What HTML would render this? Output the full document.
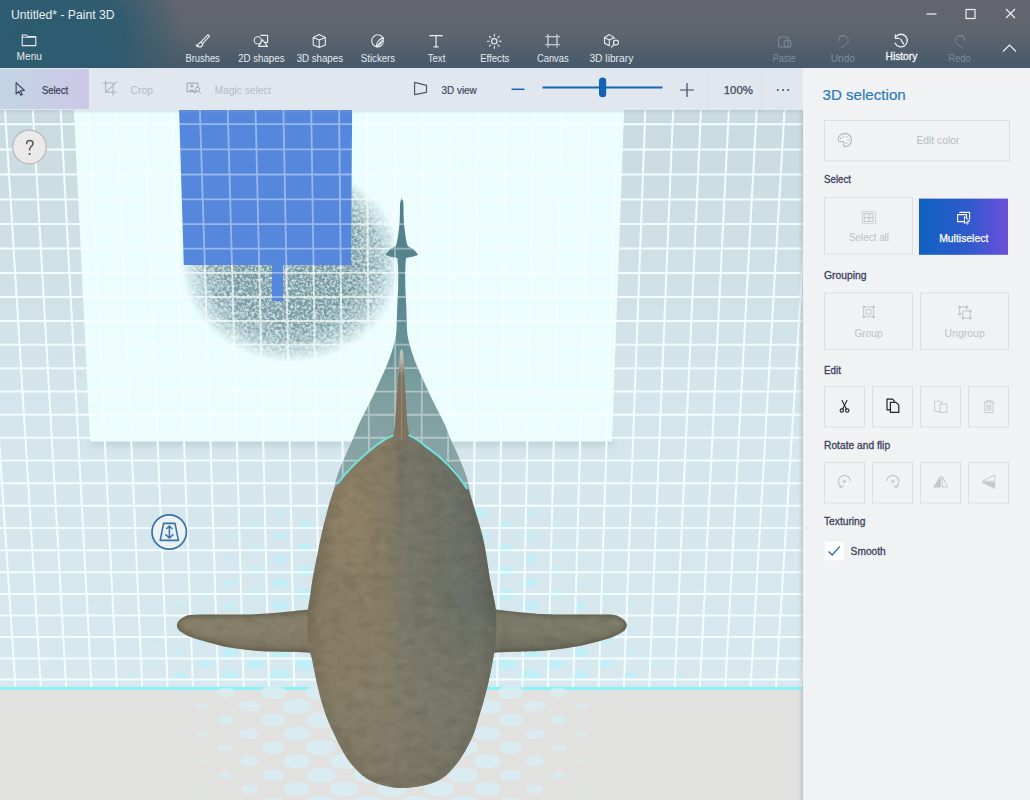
<!DOCTYPE html>
<html><head><meta charset="utf-8">
<style>
html,body{margin:0;padding:0;width:1030px;height:800px;overflow:hidden;background:#f0f2f4;}
svg{display:block;font-family:"Liberation Sans",sans-serif;}
</style></head>
<body>
<svg width="1030" height="800" viewBox="0 0 1030 800">
<defs>
  <linearGradient id="hdrV" x1="0" y1="0" x2="0" y2="68" gradientUnits="userSpaceOnUse">
    <stop offset="0" stop-color="#64666e"/>
    <stop offset="0.45" stop-color="#5f656e"/>
    <stop offset="1" stop-color="#45596a"/>
  </linearGradient>
  <radialGradient id="hdrTeal" cx="25" cy="34" r="162" gradientUnits="userSpaceOnUse" gradientTransform="translate(25 34) scale(1 0.66) translate(-25 -34)">
    <stop offset="0" stop-color="#2c5b70" stop-opacity="1"/>
    <stop offset="0.62" stop-color="#2d5b70" stop-opacity="0.92"/>
    <stop offset="0.85" stop-color="#345b6e" stop-opacity="0.4"/>
    <stop offset="1" stop-color="#3a5a6c" stop-opacity="0"/>
  </radialGradient>
  <linearGradient id="selBtn" x1="0" y1="0" x2="1" y2="0">
    <stop offset="0" stop-color="#c2d4e4"/>
    <stop offset="1" stop-color="#cdc8e7"/>
  </linearGradient>
  <linearGradient id="multiBtn" x1="0" y1="0" x2="1" y2="0">
    <stop offset="0" stop-color="#0f62c1"/>
    <stop offset="0.55" stop-color="#2f5acb"/>
    <stop offset="1" stop-color="#6b4fdb"/>
  </linearGradient>
  <clipPath id="cvClip"><rect x="0" y="110" width="803" height="690"/></clipPath>
  <linearGradient id="wallG" x1="0" y1="0" x2="0" y2="1">
    <stop offset="0" stop-color="#c9dbdf"/>
    <stop offset="0.5" stop-color="#d4e6eb"/>
    <stop offset="1" stop-color="#d7e9ee"/>
  </linearGradient>
  <linearGradient id="topShade" x1="0" y1="0" x2="0" y2="1">
    <stop offset="0" stop-color="#8a9aa4" stop-opacity="0.25"/>
    <stop offset="1" stop-color="#8a9aa4" stop-opacity="0"/>
  </linearGradient>
  <linearGradient id="rightShade" x1="0" y1="0" x2="1" y2="0">
    <stop offset="0" stop-color="#b8c4c8" stop-opacity="0"/>
    <stop offset="1" stop-color="#a9b4b8" stop-opacity="0.6"/>
  </linearGradient>
  <filter id="blur3" x="-20%" y="-200%" width="140%" height="500%"><feGaussianBlur stdDeviation="3"/></filter>
  <filter id="blur6" x="-20%" y="-20%" width="140%" height="140%"><feGaussianBlur stdDeviation="6"/></filter>
  <filter id="blur2" x="-20%" y="-50%" width="140%" height="200%"><feGaussianBlur stdDeviation="2"/></filter>
  <filter id="blur1" x="-50%" y="-5%" width="200%" height="110%"><feGaussianBlur stdDeviation="1"/></filter>
  <radialGradient id="blobG" cx="0.5" cy="0.5" r="0.5">
    <stop offset="0" stop-color="#000" stop-opacity="1"/>
    <stop offset="0.5" stop-color="#000" stop-opacity="1"/>
    <stop offset="0.78" stop-color="#000" stop-opacity="0.62"/>
    <stop offset="1" stop-color="#000" stop-opacity="0"/>
  </radialGradient>
  <filter id="speckle" x="0" y="0" width="1" height="1" color-interpolation-filters="sRGB">
    <feTurbulence type="fractalNoise" baseFrequency="0.33" numOctaves="3" seed="7" result="n"/>
    <feColorMatrix in="n" type="matrix" values="0 0 0 0 0  0 0 0 0 0  0 0 0 0 0  1 0 0 0 0" result="na"/>
    <feComposite in="na" in2="SourceAlpha" operator="arithmetic" k1="2.4" k2="0" k3="-0.25" k4="0" result="m"/>
    <feFlood flood-color="#7a9aa2"/>
    <feComposite in2="m" operator="in" result="base"/>
    <feTurbulence type="fractalNoise" baseFrequency="0.4" numOctaves="2" seed="3" result="n2"/>
    <feColorMatrix in="n2" type="matrix" values="0 0 0 0 0.8  0 0 0 0 0.9  0 0 0 0 0.92  4 0 0 0 -2.0" result="w"/>
    <feComposite in="w" in2="m" operator="in" result="wm"/>
    <feMerge><feMergeNode in="base"/><feMergeNode in="wm"/></feMerge>
  </filter>
  <filter id="mottle" x="0" y="0" width="1" height="1" color-interpolation-filters="sRGB">
    <feTurbulence type="fractalNoise" baseFrequency="0.07 0.11" numOctaves="4" seed="11" result="n"/>
    <feColorMatrix in="n" type="matrix" values="0 0 0 0 0.33  0 0 0 0 0.31  0 0 0 0 0.25  2.2 0 0 0 -1.0"/>
  </filter>
  <filter id="mottleL" x="0" y="0" width="1" height="1" color-interpolation-filters="sRGB">
    <feTurbulence type="fractalNoise" baseFrequency="0.08 0.12" numOctaves="4" seed="5" result="n"/>
    <feColorMatrix in="n" type="matrix" values="0 0 0 0 0.66  0 0 0 0 0.62  0 0 0 0 0.52  2.2 0 0 0 -1.05"/>
  </filter>
  <linearGradient id="tealG" x1="0" x2="0" gradientUnits="userSpaceOnUse" y1="197" y2="500">
    <stop offset="0" stop-color="#4f7e88"/>
    <stop offset="0.34" stop-color="#5a8891"/>
    <stop offset="0.5" stop-color="#6a9398"/>
    <stop offset="0.64" stop-color="#7d9e9f"/>
    <stop offset="1" stop-color="#8ea7a9"/>
  </linearGradient>
  <linearGradient id="bodyG" x1="300" y1="0" x2="500" y2="0" gradientUnits="userSpaceOnUse">
    <stop offset="0" stop-color="#8a7c62"/>
    <stop offset="0.4" stop-color="#877c66"/>
    <stop offset="0.55" stop-color="#767668"/>
    <stop offset="0.8" stop-color="#6b7067"/>
    <stop offset="1" stop-color="#666c64"/>
  </linearGradient>
  <linearGradient id="finL" x1="0" y1="612" x2="0" y2="652" gradientUnits="userSpaceOnUse">
    <stop offset="0" stop-color="#837d68"/>
    <stop offset="0.5" stop-color="#88806a"/>
    <stop offset="1" stop-color="#7a735f"/>
  </linearGradient>
  <linearGradient id="finR" x1="0" y1="612" x2="0" y2="652" gradientUnits="userSpaceOnUse">
    <stop offset="0" stop-color="#7c7c6c"/>
    <stop offset="0.5" stop-color="#7b7a66"/>
    <stop offset="1" stop-color="#6e6e60"/>
  </linearGradient>
  <linearGradient id="dfinG" x1="0" y1="348" x2="0" y2="446" gradientUnits="userSpaceOnUse">
    <stop offset="0" stop-color="#d4d2c8"/>
    <stop offset="0.14" stop-color="#b8b2a2"/>
    <stop offset="0.28" stop-color="#7f735e"/>
    <stop offset="0.86" stop-color="#7e725e"/>
    <stop offset="1" stop-color="#7e725e" stop-opacity="0"/>
  </linearGradient>

  <linearGradient id="lowerG" x1="0" y1="440" x2="0" y2="600" gradientUnits="userSpaceOnUse">
    <stop offset="0" stop-color="#fff" stop-opacity="0"/>
    <stop offset="1" stop-color="#fff" stop-opacity="1"/>
  </linearGradient>
  <mask id="lowerMask" maskUnits="userSpaceOnUse" x="0" y="0" width="1030" height="800"><rect x="0" y="0" width="1030" height="800" fill="url(#lowerG)"/></mask>

  <linearGradient id="headG" x1="0" y1="600" x2="0" y2="760" gradientUnits="userSpaceOnUse">
    <stop offset="0" stop-color="#857f6c" stop-opacity="0"/>
    <stop offset="0.6" stop-color="#857f6c" stop-opacity="0.45"/>
    <stop offset="1" stop-color="#7f7966" stop-opacity="0.6"/>
  </linearGradient>

</defs>

<!-- HEADER -->
<rect x="0" y="0" width="1030" height="68" fill="url(#hdrV)"/>
<rect x="0" y="0" width="1030" height="68" fill="url(#hdrTeal)"/>
<g fill="#e9eef1">
  <text x="11" y="18.8" font-size="12" textLength="103.6" lengthAdjust="spacingAndGlyphs">Untitled* - Paint 3D</text>
</g>
<!-- window controls -->
<g stroke="#eef0f2" stroke-width="1.2" fill="none">
  <line x1="926.5" y1="14" x2="936.5" y2="14"/>
  <rect x="966" y="9.5" width="9" height="9"/>
  <path d="M1006 9 L1015 18 M1015 9 L1006 18"/>
  <path d="M1003 51.5 L1009.5 45 L1016 51.5"/>
</g>
<!-- header toolbar labels -->
<g fill="#e6ebee" font-size="10">
  <text x="16.6" y="60" font-size="10.5" textLength="25.4" lengthAdjust="spacingAndGlyphs">Menu</text>
  <text x="185.4" y="62.2" textLength="34.4" lengthAdjust="spacingAndGlyphs">Brushes</text>
  <text x="238.2" y="62.2" textLength="46.3" lengthAdjust="spacingAndGlyphs">2D shapes</text>
  <text x="296.7" y="62.2" textLength="46.3" lengthAdjust="spacingAndGlyphs">3D shapes</text>
  <text x="360.8" y="62.2" textLength="34.3" lengthAdjust="spacingAndGlyphs">Stickers</text>
  <text x="427.8" y="62.2" textLength="17.5" lengthAdjust="spacingAndGlyphs">Text</text>
  <text x="480.2" y="62.2" textLength="29.2" lengthAdjust="spacingAndGlyphs">Effects</text>
  <text x="537" y="62.2" textLength="31.6" lengthAdjust="spacingAndGlyphs">Canvas</text>
  <text x="589.4" y="62.2" textLength="43.9" lengthAdjust="spacingAndGlyphs">3D library</text>
  <text x="885.5" y="60" font-size="10.5" textLength="31.8" lengthAdjust="spacingAndGlyphs" fill="#f4f6f8" stroke="#f4f6f8" stroke-width="0.3">History</text>
</g>
<g fill="#7f8d98" font-size="10">
  <text x="772.7" y="61.7" textLength="23.1" lengthAdjust="spacingAndGlyphs">Paste</text>
  <text x="830.8" y="61.7" textLength="24.1" lengthAdjust="spacingAndGlyphs">Undo</text>
  <text x="948.6" y="61.7" textLength="22.1" lengthAdjust="spacingAndGlyphs">Redo</text>
</g>
<!-- HEADER ICONS placeholder -->
<g id="hicons" stroke="#e8edf0" stroke-width="1.1" fill="none" stroke-linejoin="round" stroke-linecap="round">
  <!-- folder -->
  <path d="M22.2 35 H26.5 L27.8 36.5 H35.8 V45.6 H22.2 Z M22.2 37.2 H35.8" stroke-width="1.1"/>
  <!-- brush -->
  <path d="M207.8 34.8 L209.6 36.2 L202.6 43.6 L200.8 42.2 Z" stroke-width="1.1"/>
  <path d="M200.8 42.3 C198.8 42.2 198.6 44.2 198.2 45 C197.6 45.6 196.8 45.2 196.2 44.8 C196.8 46.4 198.4 47.2 200.2 46.8 C202.2 46.4 202.8 44.6 202.6 43.6" stroke-width="1.2"/>
  <!-- 2D shapes -->
  <circle cx="257.8" cy="40.4" r="3.6"/>
  <path d="M260.8 35.4 H267.6 V42.4 H265.3"/>
  <path d="M262.6 39.8 L258.6 46.4 H267.4 Z"/>
  <!-- 3D shapes -->
  <path d="M319.2 34.6 L325.3 37.4 V44.9 L319.2 47.6 L313.2 44.9 V37.4 Z M313.2 37.4 L319.2 40.1 L325.3 37.4 M319.2 40.1 V47.6"/>
  <!-- stickers -->
  <path d="M381.6 45.4 A6 6 0 1 1 383.4 39" />
  <path d="M383.6 40.8 A6 6 0 0 1 376.2 46.6" stroke-dasharray="1 1.3"/>
  <path d="M376.2 46.8 C376.4 42.6 379.4 38.6 383.4 37.6 C383.2 41.6 380.4 44.4 376.2 46.8 Z M376.2 46.8 L381.6 41.2"/>
  <!-- Text T -->
  <path d="M430 36.4 V35.6 H442.2 V36.4 M436.1 35.8 V46.8 M433.6 46.8 H438.6" stroke-width="1.2" stroke-linecap="butt"/>
  <!-- effects -->
  <circle cx="494.3" cy="41.3" r="2.7"/>
  <path d="M494.3 34.4 V36.2 M494.3 46.4 V48.2 M487.4 41.3 H489.2 M499.4 41.3 H501.2 M489.4 36.4 L490.6 37.6 M498 45 L499.2 46.2 M499.2 36.4 L498 37.6 M490.6 45 L489.4 46.2"/>
  <!-- canvas -->
  <rect x="548" y="36.8" width="9" height="8"/>
  <path d="M545.8 36.8 H547 M558 36.8 H559.4 M545.8 44.8 H547 M558 44.8 H559.4 M548 34.6 V35.6 M557 34.6 V35.6 M548 46 V47 M557 46 V47"/>
  <!-- 3D library -->
  <path d="M614 38.4 V37.4 L609.3 34.6 L604.5 37.4 V43.2 L609.3 45.8 M604.5 37.4 L609.3 40 L614 37.4 M609.3 40 V45.8"/>
  <circle cx="616" cy="42.6" r="2.5"/>
  <path d="M614.2 44.5 L611.5 47.2"/>
  <!-- history -->
  <path d="M896.2 36.4 A6.3 6.3 0 1 1 895.2 43.2" stroke-width="1.3"/>
  <path d="M895.4 34.8 V38.4 H899" stroke-width="1.3"/>
  <path d="M900.6 39.2 L903.6 43.8" stroke-width="1.3"/>
</g>
<g stroke="#7d8b96" stroke-width="1" fill="none" stroke-linejoin="round" stroke-linecap="round">
  <!-- paste -->
  <path d="M779 37.4 H782.2 L783.6 35.8 L785 37.4 H788 V47 H779 Z"/>
  <path d="M784.6 40.6 H790.8 V47 H784.6 Z"/>
  <!-- undo -->
  <path d="M839.8 36.6 C844.2 34.6 848.6 36.6 848.2 40.6 C847.8 43.6 844.4 45.6 841 47.6"/>
  <path d="M838.8 40.6 L839.6 36.4 L843.8 35.6"/>
  <!-- redo -->
  <path d="M963.6 36.6 C959.2 34.6 954.8 36.6 955.2 40.6 C955.6 43.6 959 45.6 962.4 47.6"/>
  <path d="M964.6 40.6 L963.8 36.4 L959.6 35.6"/>
</g>

<!-- TOOLBAR -->
<rect x="0" y="68" width="803" height="42" fill="#e1e7ee"/>
<rect x="0" y="69" width="89" height="40" fill="url(#selBtn)"/>
<line x1="707.5" y1="69" x2="707.5" y2="109" stroke="#d9dce2" stroke-width="1"/>
<line x1="761.5" y1="69" x2="761.5" y2="109" stroke="#d9dce2" stroke-width="1"/>
<g font-size="10.5">
  <text x="41.9" y="93.8" fill="#3b4060" stroke="#3b4060" stroke-width="0.25" textLength="26.1" lengthAdjust="spacingAndGlyphs">Select</text>
  <text x="130.5" y="93.8" fill="#b7bbc3" textLength="22.5" lengthAdjust="spacingAndGlyphs">Crop</text>
  <text x="214.8" y="93.8" fill="#b7bbc3" textLength="56.4" lengthAdjust="spacingAndGlyphs">Magic select</text>
  <text x="441.5" y="93.8" fill="#444a60" stroke="#444a60" stroke-width="0.2" textLength="35.3" lengthAdjust="spacingAndGlyphs">3D view</text>
  <text x="723.7" y="93.8" fill="#444a60" stroke="#444a60" stroke-width="0.25" textLength="29.2" lengthAdjust="spacingAndGlyphs">100%</text>
</g>
<!-- slider -->
<line x1="542.5" y1="87.5" x2="662.5" y2="87.5" stroke="#1565b0" stroke-width="2"/>
<rect x="599" y="77.5" width="7.2" height="19.8" rx="3.6" fill="#0f64b4"/>
<g stroke="#3f4660" stroke-width="1.2" fill="none">
  <line x1="511.5" y1="89.3" x2="524.5" y2="89.3" stroke="#1a63ad" stroke-width="1.5"/>
  <path d="M680 90 H694 M687 83 V97"/>
</g>
<g fill="#3f4660">
  <circle cx="777.8" cy="90" r="1"/><circle cx="783" cy="90" r="1"/><circle cx="788.2" cy="90" r="1"/>
</g>
<g fill="none" stroke-linejoin="round" stroke-linecap="round">
  <path d="M16.1 82.6 V94 L18.8 91.4 L20.8 95.3 L22.4 94.5 L20.4 90.7 L24.4 90.5 Z" stroke="#3b4060" stroke-width="1.1"/>
  <path d="M105.6 81.2 V92.3 H116.2 M103.2 83 H113.1 V95.2 M105.6 92.3 L116.6 81.8" stroke="#afb3ba" stroke-width="1.1"/>
  <rect x="187.2" y="83.2" width="10.6" height="8.4" stroke="#a9adb5" stroke-width="1.2"/>
  <circle cx="191.8" cy="86" r="1.5" fill="#a9adb5" stroke="none"/>
  <path d="M189.2 91.4 C189.4 88.8 194.2 88.8 194.4 91.4 Z" fill="#a9adb5" stroke="none"/>
  <circle cx="197.4" cy="89.2" r="2.1" fill="#e1e7ee" stroke="#a9adb5" stroke-width="1"/>
  <path d="M196 91 L194.4 93.6 M198.8 91 L200.6 93.6" stroke="#a9adb5" stroke-width="1"/>
  <path d="M414.6 82.4 L426.5 85.3 V92.3 L414.6 94.6 Z" stroke="#50566a" stroke-width="1.2"/>
</g>

<!-- canvas -->
<g clip-path="url(#cvClip)">
<rect x="0" y="110" width="803" height="580" fill="url(#wallG)"/>
<g id="walldots" fill="#c2eef8" opacity="1"><ellipse cx="130.0" cy="675.4" rx="4.6" ry="2.5" opacity="0.43"/><ellipse cx="180.0" cy="675.4" rx="6.8" ry="3.8" opacity="0.80"/><ellipse cx="230.0" cy="675.4" rx="9.1" ry="5.0" opacity="1.00"/><ellipse cx="280.0" cy="675.4" rx="11.3" ry="6.2" opacity="1.00"/><ellipse cx="330.0" cy="675.4" rx="12.0" ry="6.6" opacity="1.00"/><ellipse cx="380.0" cy="675.4" rx="12.0" ry="6.6" opacity="1.00"/><ellipse cx="430.0" cy="675.4" rx="12.0" ry="6.6" opacity="1.00"/><ellipse cx="480.0" cy="675.4" rx="12.0" ry="6.6" opacity="1.00"/><ellipse cx="530.0" cy="675.4" rx="11.3" ry="6.2" opacity="1.00"/><ellipse cx="580.0" cy="675.4" rx="9.1" ry="5.0" opacity="1.00"/><ellipse cx="630.0" cy="675.4" rx="6.8" ry="3.8" opacity="0.80"/><ellipse cx="680.0" cy="675.4" rx="4.6" ry="2.5" opacity="0.43"/><ellipse cx="105.0" cy="663.8" rx="3.0" ry="1.7" opacity="0.17"/><ellipse cx="155.0" cy="663.8" rx="5.3" ry="2.9" opacity="0.55"/><ellipse cx="205.0" cy="663.8" rx="7.5" ry="4.2" opacity="0.92"/><ellipse cx="255.0" cy="663.8" rx="9.8" ry="5.4" opacity="1.00"/><ellipse cx="305.0" cy="663.8" rx="12.0" ry="6.6" opacity="1.00"/><ellipse cx="355.0" cy="663.8" rx="12.0" ry="6.6" opacity="1.00"/><ellipse cx="405.0" cy="663.8" rx="12.0" ry="6.6" opacity="1.00"/><ellipse cx="455.0" cy="663.8" rx="12.0" ry="6.6" opacity="1.00"/><ellipse cx="505.0" cy="663.8" rx="12.0" ry="6.6" opacity="1.00"/><ellipse cx="555.0" cy="663.8" rx="9.8" ry="5.4" opacity="1.00"/><ellipse cx="605.0" cy="663.8" rx="7.5" ry="4.2" opacity="0.92"/><ellipse cx="655.0" cy="663.8" rx="5.3" ry="2.9" opacity="0.55"/><ellipse cx="705.0" cy="663.8" rx="3.0" ry="1.7" opacity="0.17"/><ellipse cx="130.0" cy="652.2" rx="3.8" ry="2.1" opacity="0.29"/><ellipse cx="180.0" cy="652.2" rx="6.0" ry="3.3" opacity="0.67"/><ellipse cx="230.0" cy="652.2" rx="8.3" ry="4.5" opacity="1.00"/><ellipse cx="280.0" cy="652.2" rx="10.5" ry="5.8" opacity="1.00"/><ellipse cx="330.0" cy="652.2" rx="12.0" ry="6.6" opacity="1.00"/><ellipse cx="380.0" cy="652.2" rx="12.0" ry="6.6" opacity="1.00"/><ellipse cx="430.0" cy="652.2" rx="12.0" ry="6.6" opacity="1.00"/><ellipse cx="480.0" cy="652.2" rx="12.0" ry="6.6" opacity="1.00"/><ellipse cx="530.0" cy="652.2" rx="10.5" ry="5.8" opacity="1.00"/><ellipse cx="580.0" cy="652.2" rx="8.3" ry="4.5" opacity="1.00"/><ellipse cx="630.0" cy="652.2" rx="6.0" ry="3.3" opacity="0.67"/><ellipse cx="680.0" cy="652.2" rx="3.8" ry="2.1" opacity="0.29"/><ellipse cx="155.0" cy="640.6" rx="4.5" ry="2.5" opacity="0.41"/><ellipse cx="205.0" cy="640.6" rx="6.7" ry="3.7" opacity="0.79"/><ellipse cx="255.0" cy="640.6" rx="9.0" ry="4.9" opacity="1.00"/><ellipse cx="305.0" cy="640.6" rx="11.2" ry="6.2" opacity="1.00"/><ellipse cx="355.0" cy="640.6" rx="12.0" ry="6.6" opacity="1.00"/><ellipse cx="405.0" cy="640.6" rx="12.0" ry="6.6" opacity="1.00"/><ellipse cx="455.0" cy="640.6" rx="12.0" ry="6.6" opacity="1.00"/><ellipse cx="505.0" cy="640.6" rx="11.2" ry="6.2" opacity="1.00"/><ellipse cx="555.0" cy="640.6" rx="9.0" ry="4.9" opacity="1.00"/><ellipse cx="605.0" cy="640.6" rx="6.7" ry="3.7" opacity="0.79"/><ellipse cx="655.0" cy="640.6" rx="4.5" ry="2.5" opacity="0.41"/><ellipse cx="180.0" cy="629.0" rx="5.2" ry="2.9" opacity="0.53"/><ellipse cx="230.0" cy="629.0" rx="7.5" ry="4.1" opacity="0.91"/><ellipse cx="280.0" cy="629.0" rx="9.7" ry="5.3" opacity="1.00"/><ellipse cx="330.0" cy="629.0" rx="12.0" ry="6.6" opacity="1.00"/><ellipse cx="380.0" cy="629.0" rx="12.0" ry="6.6" opacity="1.00"/><ellipse cx="430.0" cy="629.0" rx="12.0" ry="6.6" opacity="1.00"/><ellipse cx="480.0" cy="629.0" rx="12.0" ry="6.6" opacity="1.00"/><ellipse cx="530.0" cy="629.0" rx="9.7" ry="5.3" opacity="1.00"/><ellipse cx="580.0" cy="629.0" rx="7.5" ry="4.1" opacity="0.91"/><ellipse cx="630.0" cy="629.0" rx="5.2" ry="2.9" opacity="0.53"/><ellipse cx="155.0" cy="617.4" rx="3.7" ry="2.0" opacity="0.28"/><ellipse cx="205.0" cy="617.4" rx="5.9" ry="3.3" opacity="0.65"/><ellipse cx="255.0" cy="617.4" rx="8.2" ry="4.5" opacity="1.00"/><ellipse cx="305.0" cy="617.4" rx="10.4" ry="5.7" opacity="1.00"/><ellipse cx="355.0" cy="617.4" rx="12.0" ry="6.6" opacity="1.00"/><ellipse cx="405.0" cy="617.4" rx="12.0" ry="6.6" opacity="1.00"/><ellipse cx="455.0" cy="617.4" rx="12.0" ry="6.6" opacity="1.00"/><ellipse cx="505.0" cy="617.4" rx="10.4" ry="5.7" opacity="1.00"/><ellipse cx="555.0" cy="617.4" rx="8.2" ry="4.5" opacity="1.00"/><ellipse cx="605.0" cy="617.4" rx="5.9" ry="3.3" opacity="0.65"/><ellipse cx="655.0" cy="617.4" rx="3.7" ry="2.0" opacity="0.28"/><ellipse cx="180.0" cy="605.8" rx="4.4" ry="2.4" opacity="0.40"/><ellipse cx="230.0" cy="605.8" rx="6.6" ry="3.7" opacity="0.77"/><ellipse cx="280.0" cy="605.8" rx="8.9" ry="4.9" opacity="1.00"/><ellipse cx="330.0" cy="605.8" rx="11.1" ry="6.1" opacity="1.00"/><ellipse cx="380.0" cy="605.8" rx="12.0" ry="6.6" opacity="1.00"/><ellipse cx="430.0" cy="605.8" rx="12.0" ry="6.6" opacity="1.00"/><ellipse cx="480.0" cy="605.8" rx="11.1" ry="6.1" opacity="1.00"/><ellipse cx="530.0" cy="605.8" rx="8.9" ry="4.9" opacity="1.00"/><ellipse cx="580.0" cy="605.8" rx="6.6" ry="3.7" opacity="0.77"/><ellipse cx="630.0" cy="605.8" rx="4.4" ry="2.4" opacity="0.40"/><ellipse cx="205.0" cy="594.2" rx="5.1" ry="2.8" opacity="0.52"/><ellipse cx="255.0" cy="594.2" rx="7.4" ry="4.0" opacity="0.89"/><ellipse cx="305.0" cy="594.2" rx="9.6" ry="5.3" opacity="1.00"/><ellipse cx="355.0" cy="594.2" rx="11.9" ry="6.5" opacity="1.00"/><ellipse cx="405.0" cy="594.2" rx="12.0" ry="6.6" opacity="1.00"/><ellipse cx="455.0" cy="594.2" rx="11.9" ry="6.5" opacity="1.00"/><ellipse cx="505.0" cy="594.2" rx="9.6" ry="5.3" opacity="1.00"/><ellipse cx="555.0" cy="594.2" rx="7.4" ry="4.0" opacity="0.89"/><ellipse cx="605.0" cy="594.2" rx="5.1" ry="2.8" opacity="0.52"/><ellipse cx="180.0" cy="582.6" rx="3.6" ry="2.0" opacity="0.26"/><ellipse cx="230.0" cy="582.6" rx="5.8" ry="3.2" opacity="0.64"/><ellipse cx="280.0" cy="582.6" rx="8.1" ry="4.4" opacity="1.00"/><ellipse cx="330.0" cy="582.6" rx="10.3" ry="5.7" opacity="1.00"/><ellipse cx="380.0" cy="582.6" rx="12.0" ry="6.6" opacity="1.00"/><ellipse cx="430.0" cy="582.6" rx="12.0" ry="6.6" opacity="1.00"/><ellipse cx="480.0" cy="582.6" rx="10.3" ry="5.7" opacity="1.00"/><ellipse cx="530.0" cy="582.6" rx="8.1" ry="4.4" opacity="1.00"/><ellipse cx="580.0" cy="582.6" rx="5.8" ry="3.2" opacity="0.64"/><ellipse cx="630.0" cy="582.6" rx="3.6" ry="2.0" opacity="0.26"/><ellipse cx="205.0" cy="571.0" rx="4.3" ry="2.4" opacity="0.38"/><ellipse cx="255.0" cy="571.0" rx="6.5" ry="3.6" opacity="0.76"/><ellipse cx="305.0" cy="571.0" rx="8.8" ry="4.8" opacity="1.00"/><ellipse cx="355.0" cy="571.0" rx="11.0" ry="6.1" opacity="1.00"/><ellipse cx="405.0" cy="571.0" rx="12.0" ry="6.6" opacity="1.00"/><ellipse cx="455.0" cy="571.0" rx="11.0" ry="6.1" opacity="1.00"/><ellipse cx="505.0" cy="571.0" rx="8.8" ry="4.8" opacity="1.00"/><ellipse cx="555.0" cy="571.0" rx="6.5" ry="3.6" opacity="0.76"/><ellipse cx="605.0" cy="571.0" rx="4.3" ry="2.4" opacity="0.38"/><ellipse cx="230.0" cy="559.4" rx="5.0" ry="2.8" opacity="0.50"/><ellipse cx="280.0" cy="559.4" rx="7.3" ry="4.0" opacity="0.88"/><ellipse cx="330.0" cy="559.4" rx="9.5" ry="5.2" opacity="1.00"/><ellipse cx="380.0" cy="559.4" rx="11.8" ry="6.5" opacity="1.00"/><ellipse cx="430.0" cy="559.4" rx="11.8" ry="6.5" opacity="1.00"/><ellipse cx="480.0" cy="559.4" rx="9.5" ry="5.2" opacity="1.00"/><ellipse cx="530.0" cy="559.4" rx="7.3" ry="4.0" opacity="0.88"/><ellipse cx="580.0" cy="559.4" rx="5.0" ry="2.8" opacity="0.50"/><ellipse cx="205.0" cy="547.8" rx="3.5" ry="1.9" opacity="0.25"/><ellipse cx="255.0" cy="547.8" rx="5.7" ry="3.2" opacity="0.62"/><ellipse cx="305.0" cy="547.8" rx="8.0" ry="4.4" opacity="1.00"/><ellipse cx="355.0" cy="547.8" rx="10.2" ry="5.6" opacity="1.00"/><ellipse cx="405.0" cy="547.8" rx="12.0" ry="6.6" opacity="1.00"/><ellipse cx="455.0" cy="547.8" rx="10.2" ry="5.6" opacity="1.00"/><ellipse cx="505.0" cy="547.8" rx="8.0" ry="4.4" opacity="1.00"/><ellipse cx="555.0" cy="547.8" rx="5.7" ry="3.2" opacity="0.62"/><ellipse cx="605.0" cy="547.8" rx="3.5" ry="1.9" opacity="0.25"/><ellipse cx="230.0" cy="536.2" rx="4.2" ry="2.3" opacity="0.37"/><ellipse cx="280.0" cy="536.2" rx="6.5" ry="3.6" opacity="0.74"/><ellipse cx="330.0" cy="536.2" rx="8.7" ry="4.8" opacity="1.00"/><ellipse cx="380.0" cy="536.2" rx="11.0" ry="6.0" opacity="1.00"/><ellipse cx="430.0" cy="536.2" rx="11.0" ry="6.0" opacity="1.00"/><ellipse cx="480.0" cy="536.2" rx="8.7" ry="4.8" opacity="1.00"/><ellipse cx="530.0" cy="536.2" rx="6.5" ry="3.6" opacity="0.74"/><ellipse cx="580.0" cy="536.2" rx="4.2" ry="2.3" opacity="0.37"/><ellipse cx="255.0" cy="524.6" rx="4.9" ry="2.7" opacity="0.49"/><ellipse cx="305.0" cy="524.6" rx="7.2" ry="3.9" opacity="0.86"/><ellipse cx="355.0" cy="524.6" rx="9.4" ry="5.2" opacity="1.00"/><ellipse cx="405.0" cy="524.6" rx="11.7" ry="6.4" opacity="1.00"/><ellipse cx="455.0" cy="524.6" rx="9.4" ry="5.2" opacity="1.00"/><ellipse cx="505.0" cy="524.6" rx="7.2" ry="3.9" opacity="0.86"/><ellipse cx="555.0" cy="524.6" rx="4.9" ry="2.7" opacity="0.49"/><ellipse cx="230.0" cy="513.0" rx="3.4" ry="1.9" opacity="0.23"/><ellipse cx="280.0" cy="513.0" rx="5.6" ry="3.1" opacity="0.61"/><ellipse cx="330.0" cy="513.0" rx="7.9" ry="4.3" opacity="0.98"/><ellipse cx="380.0" cy="513.0" rx="10.1" ry="5.6" opacity="1.00"/><ellipse cx="430.0" cy="513.0" rx="10.1" ry="5.6" opacity="1.00"/><ellipse cx="480.0" cy="513.0" rx="7.9" ry="4.3" opacity="0.98"/><ellipse cx="530.0" cy="513.0" rx="5.6" ry="3.1" opacity="0.61"/><ellipse cx="580.0" cy="513.0" rx="3.4" ry="1.9" opacity="0.23"/></g>
<path d="M92 436 L612 436 L614 446 L90 446 Z" fill="#9fb5bb" opacity="0.4" filter="url(#blur3)"/>
<g stroke="#f2fdff" stroke-width="2.0" stroke-opacity="1.0" fill="none">
<path d="M0 124.13H803 M0 149.42H803 M0 174.52H803 M0 199.41H803 M0 224.10H803 M0 248.60H803 M0 272.90H803 M0 297.01H803 M0 320.93H803 M0 344.66H803 M0 368.21H803 M0 391.57H803 M0 414.76H803 M0 437.76H803 M0 460.59H803 M0 483.24H803 M0 505.72H803 M0 528.03H803 M0 550.17H803 M0 572.14H803 M0 593.94H803 M0 615.59H803 M0 637.07H803 M0 658.39H803 M0 679.56H803 M-51.03 105L-9.65 690 M-23.17 105L15.69 690 M4.69 105L41.03 690 M32.55 105L66.36 690 M60.41 105L91.70 690 M88.27 105L117.03 690 M116.14 105L142.37 690 M144.00 105L167.70 690 M171.86 105L193.04 690 M199.72 105L218.38 690 M227.58 105L243.71 690 M255.44 105L269.05 690 M283.31 105L294.38 690 M311.17 105L319.72 690 M339.03 105L345.05 690 M366.89 105L370.39 690 M394.75 105L395.73 690 M422.61 105L421.06 690 M450.47 105L446.40 690 M478.34 105L471.73 690 M506.20 105L497.07 690 M534.06 105L522.40 690 M561.92 105L547.74 690 M589.78 105L573.08 690 M617.64 105L598.41 690 M645.51 105L623.75 690 M673.37 105L649.08 690 M701.23 105L674.42 690 M729.09 105L699.76 690 M756.95 105L725.09 690 M784.81 105L750.43 690 M812.68 105L775.76 690 M840.54 105L801.10 690"/>
</g>
<path d="M73.4 100 L624.5 100 L612 441.5 L90 441.5 Z" fill="#ebfdfd"/>
<g filter="url(#speckle)"><ellipse cx="291" cy="263" rx="110" ry="99" fill="url(#blobG)"/></g>
<clipPath id="paperClip"><path d="M73.4 100 L624.5 100 L612 441.5 L90 441.5 Z"/></clipPath>
<g clip-path="url(#paperClip)"><g stroke="#ffffff" stroke-width="1.9" stroke-opacity="0.55" fill="none">
<path d="M0 124.13H803 M0 149.42H803 M0 174.52H803 M0 199.41H803 M0 224.10H803 M0 248.60H803 M0 272.90H803 M0 297.01H803 M0 320.93H803 M0 344.66H803 M0 368.21H803 M0 391.57H803 M0 414.76H803 M0 437.76H803 M0 460.59H803 M0 483.24H803 M0 505.72H803 M0 528.03H803 M0 550.17H803 M0 572.14H803 M0 593.94H803 M0 615.59H803 M0 637.07H803 M0 658.39H803 M0 679.56H803 M-51.03 105L-9.65 690 M-23.17 105L15.69 690 M4.69 105L41.03 690 M32.55 105L66.36 690 M60.41 105L91.70 690 M88.27 105L117.03 690 M116.14 105L142.37 690 M144.00 105L167.70 690 M171.86 105L193.04 690 M199.72 105L218.38 690 M227.58 105L243.71 690 M255.44 105L269.05 690 M283.31 105L294.38 690 M311.17 105L319.72 690 M339.03 105L345.05 690 M366.89 105L370.39 690 M394.75 105L395.73 690 M422.61 105L421.06 690 M450.47 105L446.40 690 M478.34 105L471.73 690 M506.20 105L497.07 690 M534.06 105L522.40 690 M561.92 105L547.74 690 M589.78 105L573.08 690 M617.64 105L598.41 690 M645.51 105L623.75 690 M673.37 105L649.08 690 M701.23 105L674.42 690 M729.09 105L699.76 690 M756.95 105L725.09 690 M784.81 105L750.43 690 M812.68 105L775.76 690 M840.54 105L801.10 690"/>
</g></g>
<clipPath id="blobClip"><ellipse cx="290" cy="265" rx="100" ry="92"/></clipPath>
<g clip-path="url(#blobClip)"><g stroke="#ffffff" stroke-width="1.9" stroke-opacity="0.3" fill="none">
<path d="M0 124.13H803 M0 149.42H803 M0 174.52H803 M0 199.41H803 M0 224.10H803 M0 248.60H803 M0 272.90H803 M0 297.01H803 M0 320.93H803 M0 344.66H803 M0 368.21H803 M0 391.57H803 M0 414.76H803 M0 437.76H803 M0 460.59H803 M0 483.24H803 M0 505.72H803 M0 528.03H803 M0 550.17H803 M0 572.14H803 M0 593.94H803 M0 615.59H803 M0 637.07H803 M0 658.39H803 M0 679.56H803 M-51.03 105L-9.65 690 M-23.17 105L15.69 690 M4.69 105L41.03 690 M32.55 105L66.36 690 M60.41 105L91.70 690 M88.27 105L117.03 690 M116.14 105L142.37 690 M144.00 105L167.70 690 M171.86 105L193.04 690 M199.72 105L218.38 690 M227.58 105L243.71 690 M255.44 105L269.05 690 M283.31 105L294.38 690 M311.17 105L319.72 690 M339.03 105L345.05 690 M366.89 105L370.39 690 M394.75 105L395.73 690 M422.61 105L421.06 690 M450.47 105L446.40 690 M478.34 105L471.73 690 M506.20 105L497.07 690 M534.06 105L522.40 690 M561.92 105L547.74 690 M589.78 105L573.08 690 M617.64 105L598.41 690 M645.51 105L623.75 690 M673.37 105L649.08 690 M701.23 105L674.42 690 M729.09 105L699.76 690 M756.95 105L725.09 690 M784.81 105L750.43 690 M812.68 105L775.76 690 M840.54 105L801.10 690"/>
</g></g>
<path d="M178.8 100 L352.2 100 L351 265 L283 265 L283 301 L272 301 L272 265 L183.8 265 Z" fill="#5588dd"/>
<path d="M401.5 197.5 C401.80 198.42 402.95 200.08 403.30 203.00 C403.65 205.92 403.48 211.50 403.60 215.00 C403.72 218.50 403.77 221.17 404.00 224.00 C404.23 226.83 404.63 229.33 405.00 232.00 C405.37 234.67 405.70 237.67 406.20 240.00 C406.70 242.33 406.78 244.42 408.00 246.00 C409.22 247.58 411.83 248.08 413.50 249.50 C415.17 250.92 417.25 253.67 418.00 254.50 C417 256 413 256.5 406 258 C405.92 259.17 405.63 262.17 405.50 265.00 C405.37 267.83 405.22 271.10 405.20 275.00 C405.18 278.90 405.23 283.40 405.40 288.40 C405.57 293.40 405.98 299.73 406.20 305.00 C406.42 310.27 406.48 315.00 406.70 320.00 C406.92 325.00 406.75 330.00 407.50 335.00 C408.25 340.00 409.70 345.00 411.20 350.00 C412.70 355.00 414.50 360.00 416.50 365.00 C418.50 370.00 420.95 375.00 423.20 380.00 C425.45 385.00 427.62 390.00 430.00 395.00 C432.38 400.00 435.00 405.00 437.50 410.00 C440.00 415.00 442.75 420.00 445.00 425.00 C447.25 430.00 449.08 435.50 451.00 440.00 C452.92 444.50 453.87 445.75 456.50 452.00 C459.13 458.25 464.38 469.50 466.80 477.50 C469.22 485.50 470.30 496.25 471.00 500.00 L332.5 500 C333.20 496.25 334.28 485.50 336.70 477.50 C339.12 469.50 344.37 458.25 347.00 452.00 C349.63 445.75 350.58 444.50 352.50 440.00 C354.42 435.50 356.25 430.00 358.50 425.00 C360.75 420.00 363.50 415.00 366.00 410.00 C368.50 405.00 371.12 400.00 373.50 395.00 C375.88 390.00 378.05 385.00 380.30 380.00 C382.55 375.00 385.00 370.00 387.00 365.00 C389.00 360.00 390.80 355.00 392.30 350.00 C393.80 345.00 395.25 340.00 396.00 335.00 C396.75 330.00 396.58 325.00 396.80 320.00 C397.02 315.00 397.08 310.27 397.30 305.00 C397.52 299.73 397.93 293.40 398.10 288.40 C398.27 283.40 398.32 278.90 398.30 275.00 C398.28 271.10 398.13 267.83 398.00 265.00 C397.87 262.17 397.58 259.17 397.50 258.00 C390.5 256.5 386.5 256 385.5 254.5 C386.25 253.67 388.33 250.92 390.00 249.50 C391.67 248.08 394.28 247.58 395.50 246.00 C396.72 244.42 396.80 242.33 397.30 240.00 C397.80 237.67 398.13 234.67 398.50 232.00 C398.87 229.33 399.27 226.83 399.50 224.00 C399.73 221.17 399.78 218.50 399.90 215.00 C400.02 211.50 399.85 205.92 400.20 203.00 C400.55 200.08 401.70 198.42 402.00 197.50 Z" fill="url(#tealG)"/>
<clipPath id="bt"><path d="M178.8 100 L352.2 100 L351 265 L283 265 L283 301 L272 301 L272 265 L183.8 265 Z"/><path d="M401.5 197.5 C401.80 198.42 402.95 200.08 403.30 203.00 C403.65 205.92 403.48 211.50 403.60 215.00 C403.72 218.50 403.77 221.17 404.00 224.00 C404.23 226.83 404.63 229.33 405.00 232.00 C405.37 234.67 405.70 237.67 406.20 240.00 C406.70 242.33 406.78 244.42 408.00 246.00 C409.22 247.58 411.83 248.08 413.50 249.50 C415.17 250.92 417.25 253.67 418.00 254.50 C417 256 413 256.5 406 258 C405.92 259.17 405.63 262.17 405.50 265.00 C405.37 267.83 405.22 271.10 405.20 275.00 C405.18 278.90 405.23 283.40 405.40 288.40 C405.57 293.40 405.98 299.73 406.20 305.00 C406.42 310.27 406.48 315.00 406.70 320.00 C406.92 325.00 406.75 330.00 407.50 335.00 C408.25 340.00 409.70 345.00 411.20 350.00 C412.70 355.00 414.50 360.00 416.50 365.00 C418.50 370.00 420.95 375.00 423.20 380.00 C425.45 385.00 427.62 390.00 430.00 395.00 C432.38 400.00 435.00 405.00 437.50 410.00 C440.00 415.00 442.75 420.00 445.00 425.00 C447.25 430.00 449.08 435.50 451.00 440.00 C452.92 444.50 453.87 445.75 456.50 452.00 C459.13 458.25 464.38 469.50 466.80 477.50 C469.22 485.50 470.30 496.25 471.00 500.00 L332.5 500 C333.20 496.25 334.28 485.50 336.70 477.50 C339.12 469.50 344.37 458.25 347.00 452.00 C349.63 445.75 350.58 444.50 352.50 440.00 C354.42 435.50 356.25 430.00 358.50 425.00 C360.75 420.00 363.50 415.00 366.00 410.00 C368.50 405.00 371.12 400.00 373.50 395.00 C375.88 390.00 378.05 385.00 380.30 380.00 C382.55 375.00 385.00 370.00 387.00 365.00 C389.00 360.00 390.80 355.00 392.30 350.00 C393.80 345.00 395.25 340.00 396.00 335.00 C396.75 330.00 396.58 325.00 396.80 320.00 C397.02 315.00 397.08 310.27 397.30 305.00 C397.52 299.73 397.93 293.40 398.10 288.40 C398.27 283.40 398.32 278.90 398.30 275.00 C398.28 271.10 398.13 267.83 398.00 265.00 C397.87 262.17 397.58 259.17 397.50 258.00 C390.5 256.5 386.5 256 385.5 254.5 C386.25 253.67 388.33 250.92 390.00 249.50 C391.67 248.08 394.28 247.58 395.50 246.00 C396.72 244.42 396.80 242.33 397.30 240.00 C397.80 237.67 398.13 234.67 398.50 232.00 C398.87 229.33 399.27 226.83 399.50 224.00 C399.73 221.17 399.78 218.50 399.90 215.00 C400.02 211.50 399.85 205.92 400.20 203.00 C400.55 200.08 401.70 198.42 402.00 197.50 Z"/></clipPath>
<g clip-path="url(#bt)"><g stroke="#ffffff" stroke-width="1.8" stroke-opacity="0.4" fill="none">
<path d="M0 124.13H803 M0 149.42H803 M0 174.52H803 M0 199.41H803 M0 224.10H803 M0 248.60H803 M0 272.90H803 M0 297.01H803 M0 320.93H803 M0 344.66H803 M0 368.21H803 M0 391.57H803 M0 414.76H803 M0 437.76H803 M0 460.59H803 M0 483.24H803 M0 505.72H803 M0 528.03H803 M0 550.17H803 M0 572.14H803 M0 593.94H803 M0 615.59H803 M0 637.07H803 M0 658.39H803 M0 679.56H803 M-51.03 105L-9.65 690 M-23.17 105L15.69 690 M4.69 105L41.03 690 M32.55 105L66.36 690 M60.41 105L91.70 690 M88.27 105L117.03 690 M116.14 105L142.37 690 M144.00 105L167.70 690 M171.86 105L193.04 690 M199.72 105L218.38 690 M227.58 105L243.71 690 M255.44 105L269.05 690 M283.31 105L294.38 690 M311.17 105L319.72 690 M339.03 105L345.05 690 M366.89 105L370.39 690 M394.75 105L395.73 690 M422.61 105L421.06 690 M450.47 105L446.40 690 M478.34 105L471.73 690 M506.20 105L497.07 690 M534.06 105L522.40 690 M561.92 105L547.74 690 M589.78 105L573.08 690 M617.64 105L598.41 690 M645.51 105L623.75 690 M673.37 105L649.08 690 M701.23 105L674.42 690 M729.09 105L699.76 690 M756.95 105L725.09 690 M784.81 105L750.43 690 M812.68 105L775.76 690 M840.54 105L801.10 690"/>
</g></g>
<rect x="0" y="686.8" width="803" height="3.4" fill="#8ff0f6"/>
<rect x="0" y="690.2" width="803" height="110" fill="#e1e1df"/>
<g id="floordots" fill="#d9eef5" opacity="0.85"><ellipse cx="178.2" cy="692.4" rx="4.5" ry="2.3" opacity="0.35"/><ellipse cx="225.8" cy="692.4" rx="8.7" ry="4.5" opacity="0.96"/><ellipse cx="273.2" cy="692.4" rx="13.0" ry="6.8" opacity="1.00"/><ellipse cx="320.8" cy="692.4" rx="15.0" ry="7.8" opacity="1.00"/><ellipse cx="368.2" cy="692.4" rx="15.0" ry="7.8" opacity="1.00"/><ellipse cx="415.8" cy="692.4" rx="15.0" ry="7.8" opacity="1.00"/><ellipse cx="463.2" cy="692.4" rx="15.0" ry="7.8" opacity="1.00"/><ellipse cx="510.8" cy="692.4" rx="13.0" ry="6.8" opacity="1.00"/><ellipse cx="558.2" cy="692.4" rx="8.7" ry="4.5" opacity="0.96"/><ellipse cx="605.8" cy="692.4" rx="4.5" ry="2.3" opacity="0.35"/><ellipse cx="202.0" cy="706.2" rx="6.4" ry="3.4" opacity="0.64"/><ellipse cx="249.5" cy="706.2" rx="10.7" ry="5.6" opacity="1.00"/><ellipse cx="297.0" cy="706.2" rx="15.0" ry="7.8" opacity="1.00"/><ellipse cx="344.5" cy="706.2" rx="15.0" ry="7.8" opacity="1.00"/><ellipse cx="392.0" cy="706.2" rx="15.0" ry="7.8" opacity="1.00"/><ellipse cx="439.5" cy="706.2" rx="15.0" ry="7.8" opacity="1.00"/><ellipse cx="487.0" cy="706.2" rx="15.0" ry="7.8" opacity="1.00"/><ellipse cx="534.5" cy="706.2" rx="10.7" ry="5.6" opacity="1.00"/><ellipse cx="582.0" cy="706.2" rx="6.4" ry="3.4" opacity="0.64"/><ellipse cx="178.2" cy="720.0" rx="4.0" ry="2.1" opacity="0.28"/><ellipse cx="225.8" cy="720.0" rx="8.2" ry="4.3" opacity="0.89"/><ellipse cx="273.2" cy="720.0" rx="12.5" ry="6.5" opacity="1.00"/><ellipse cx="320.8" cy="720.0" rx="15.0" ry="7.8" opacity="1.00"/><ellipse cx="368.2" cy="720.0" rx="15.0" ry="7.8" opacity="1.00"/><ellipse cx="415.8" cy="720.0" rx="15.0" ry="7.8" opacity="1.00"/><ellipse cx="463.2" cy="720.0" rx="15.0" ry="7.8" opacity="1.00"/><ellipse cx="510.8" cy="720.0" rx="12.5" ry="6.5" opacity="1.00"/><ellipse cx="558.2" cy="720.0" rx="8.2" ry="4.3" opacity="0.89"/><ellipse cx="605.8" cy="720.0" rx="4.0" ry="2.1" opacity="0.28"/><ellipse cx="202.0" cy="733.8" rx="5.8" ry="3.0" opacity="0.54"/><ellipse cx="249.5" cy="733.8" rx="10.0" ry="5.2" opacity="1.00"/><ellipse cx="297.0" cy="733.8" rx="14.3" ry="7.4" opacity="1.00"/><ellipse cx="344.5" cy="733.8" rx="15.0" ry="7.8" opacity="1.00"/><ellipse cx="392.0" cy="733.8" rx="15.0" ry="7.8" opacity="1.00"/><ellipse cx="439.5" cy="733.8" rx="15.0" ry="7.8" opacity="1.00"/><ellipse cx="487.0" cy="733.8" rx="14.3" ry="7.4" opacity="1.00"/><ellipse cx="534.5" cy="733.8" rx="10.0" ry="5.2" opacity="1.00"/><ellipse cx="582.0" cy="733.8" rx="5.8" ry="3.0" opacity="0.54"/><ellipse cx="178.2" cy="747.6" rx="3.3" ry="1.7" opacity="0.18"/><ellipse cx="225.8" cy="747.6" rx="7.5" ry="3.9" opacity="0.79"/><ellipse cx="273.2" cy="747.6" rx="11.8" ry="6.1" opacity="1.00"/><ellipse cx="320.8" cy="747.6" rx="15.0" ry="7.8" opacity="1.00"/><ellipse cx="368.2" cy="747.6" rx="15.0" ry="7.8" opacity="1.00"/><ellipse cx="415.8" cy="747.6" rx="15.0" ry="7.8" opacity="1.00"/><ellipse cx="463.2" cy="747.6" rx="15.0" ry="7.8" opacity="1.00"/><ellipse cx="510.8" cy="747.6" rx="11.8" ry="6.1" opacity="1.00"/><ellipse cx="558.2" cy="747.6" rx="7.5" ry="3.9" opacity="0.79"/><ellipse cx="605.8" cy="747.6" rx="3.3" ry="1.7" opacity="0.18"/><ellipse cx="202.0" cy="761.4" rx="5.1" ry="2.6" opacity="0.44"/><ellipse cx="249.5" cy="761.4" rx="9.3" ry="4.9" opacity="1.00"/><ellipse cx="297.0" cy="761.4" rx="13.6" ry="7.1" opacity="1.00"/><ellipse cx="344.5" cy="761.4" rx="15.0" ry="7.8" opacity="1.00"/><ellipse cx="392.0" cy="761.4" rx="15.0" ry="7.8" opacity="1.00"/><ellipse cx="439.5" cy="761.4" rx="15.0" ry="7.8" opacity="1.00"/><ellipse cx="487.0" cy="761.4" rx="13.6" ry="7.1" opacity="1.00"/><ellipse cx="534.5" cy="761.4" rx="9.3" ry="4.9" opacity="1.00"/><ellipse cx="582.0" cy="761.4" rx="5.1" ry="2.6" opacity="0.44"/><ellipse cx="225.8" cy="775.2" rx="6.9" ry="3.6" opacity="0.69"/><ellipse cx="273.2" cy="775.2" rx="11.1" ry="5.8" opacity="1.00"/><ellipse cx="320.8" cy="775.2" rx="15.0" ry="7.8" opacity="1.00"/><ellipse cx="368.2" cy="775.2" rx="15.0" ry="7.8" opacity="1.00"/><ellipse cx="415.8" cy="775.2" rx="15.0" ry="7.8" opacity="1.00"/><ellipse cx="463.2" cy="775.2" rx="15.0" ry="7.8" opacity="1.00"/><ellipse cx="510.8" cy="775.2" rx="11.1" ry="5.8" opacity="1.00"/><ellipse cx="558.2" cy="775.2" rx="6.9" ry="3.6" opacity="0.69"/><ellipse cx="202.0" cy="789.0" rx="4.4" ry="2.3" opacity="0.34"/><ellipse cx="249.5" cy="789.0" rx="8.7" ry="4.5" opacity="0.95"/><ellipse cx="297.0" cy="789.0" rx="12.9" ry="6.7" opacity="1.00"/><ellipse cx="344.5" cy="789.0" rx="15.0" ry="7.8" opacity="1.00"/><ellipse cx="392.0" cy="789.0" rx="15.0" ry="7.8" opacity="1.00"/><ellipse cx="439.5" cy="789.0" rx="15.0" ry="7.8" opacity="1.00"/><ellipse cx="487.0" cy="789.0" rx="12.9" ry="6.7" opacity="1.00"/><ellipse cx="534.5" cy="789.0" rx="8.7" ry="4.5" opacity="0.95"/><ellipse cx="582.0" cy="789.0" rx="4.4" ry="2.3" opacity="0.34"/><ellipse cx="225.8" cy="802.8" rx="6.2" ry="3.2" opacity="0.60"/><ellipse cx="273.2" cy="802.8" rx="10.4" ry="5.4" opacity="1.00"/><ellipse cx="320.8" cy="802.8" rx="14.7" ry="7.7" opacity="1.00"/><ellipse cx="368.2" cy="802.8" rx="15.0" ry="7.8" opacity="1.00"/><ellipse cx="415.8" cy="802.8" rx="15.0" ry="7.8" opacity="1.00"/><ellipse cx="463.2" cy="802.8" rx="14.7" ry="7.7" opacity="1.00"/><ellipse cx="510.8" cy="802.8" rx="10.4" ry="5.4" opacity="1.00"/><ellipse cx="558.2" cy="802.8" rx="6.2" ry="3.2" opacity="0.60"/></g>
<g id="shark">
<path d="M330.0 606.0 C326.5 598.6 320.2 608.1 309.0 609.4 C297.8 610.7 276.2 612.9 263.0 613.8 C249.8 614.6 241.7 614.3 230.0 614.5 C218.3 614.7 200.7 614.3 193.0 614.8 C185.3 615.2 186.1 616.2 183.7 617.2 C181.3 618.2 179.7 619.6 178.6 621.0 C177.5 622.4 177.0 624.1 176.9 625.4 C176.8 626.7 177.4 627.8 178.0 628.8 C178.6 629.8 178.5 630.2 180.6 631.6 C182.7 633.0 186.6 635.5 190.6 637.1 C194.6 638.7 197.8 639.5 204.4 641.2 C211.0 643.0 220.2 645.9 230.0 647.6 C239.8 649.3 250.2 650.5 263.2 651.3 C276.2 652.1 296.9 651.9 308.0 652.4 C319.1 652.9 326.3 661.7 330.0 654.0 C333.7 646.3 333.5 613.4 330.0 606.0 Z" fill="url(#finL)"/>
<path d="M474.0 606.0 C477.5 598.6 483.5 608.1 494.8 609.4 C506.1 610.7 528.6 613.2 542.0 614.0 C555.4 614.8 563.7 614.3 575.0 614.4 C586.3 614.5 602.6 614.2 610.0 614.6 C617.4 615.0 617.0 615.9 619.5 617.0 C622.0 618.1 623.8 619.6 625.0 621.0 C626.2 622.4 626.7 623.9 626.8 625.2 C626.9 626.5 626.2 627.7 625.6 628.8 C625.0 629.9 625.1 630.2 623.0 631.6 C620.9 633.0 617.0 635.4 613.0 637.0 C609.0 638.6 605.3 639.6 599.0 641.2 C592.7 642.8 584.5 645.2 575.0 646.8 C565.5 648.4 555.2 649.9 542.0 650.8 C528.8 651.7 507.3 651.9 496.0 652.4 C484.7 652.9 477.7 661.7 474.0 654.0 C470.3 646.3 470.5 613.4 474.0 606.0 Z" fill="url(#finR)"/>
<clipPath id="finClip"><path d="M330.0 606.0 C326.5 598.6 320.2 608.1 309.0 609.4 C297.8 610.7 276.2 612.9 263.0 613.8 C249.8 614.6 241.7 614.3 230.0 614.5 C218.3 614.7 200.7 614.3 193.0 614.8 C185.3 615.2 186.1 616.2 183.7 617.2 C181.3 618.2 179.7 619.6 178.6 621.0 C177.5 622.4 177.0 624.1 176.9 625.4 C176.8 626.7 177.4 627.8 178.0 628.8 C178.6 629.8 178.5 630.2 180.6 631.6 C182.7 633.0 186.6 635.5 190.6 637.1 C194.6 638.7 197.8 639.5 204.4 641.2 C211.0 643.0 220.2 645.9 230.0 647.6 C239.8 649.3 250.2 650.5 263.2 651.3 C276.2 652.1 296.9 651.9 308.0 652.4 C319.1 652.9 326.3 661.7 330.0 654.0 C333.7 646.3 333.5 613.4 330.0 606.0 Z"/><path d="M474.0 606.0 C477.5 598.6 483.5 608.1 494.8 609.4 C506.1 610.7 528.6 613.2 542.0 614.0 C555.4 614.8 563.7 614.3 575.0 614.4 C586.3 614.5 602.6 614.2 610.0 614.6 C617.4 615.0 617.0 615.9 619.5 617.0 C622.0 618.1 623.8 619.6 625.0 621.0 C626.2 622.4 626.7 623.9 626.8 625.2 C626.9 626.5 626.2 627.7 625.6 628.8 C625.0 629.9 625.1 630.2 623.0 631.6 C620.9 633.0 617.0 635.4 613.0 637.0 C609.0 638.6 605.3 639.6 599.0 641.2 C592.7 642.8 584.5 645.2 575.0 646.8 C565.5 648.4 555.2 649.9 542.0 650.8 C528.8 651.7 507.3 651.9 496.0 652.4 C484.7 652.9 477.7 661.7 474.0 654.0 C470.3 646.3 470.5 613.4 474.0 606.0 Z"/></clipPath>
<g clip-path="url(#finClip)"><path d="M330.0 606.0 C326.5 598.6 320.2 608.1 309.0 609.4 C297.8 610.7 276.2 612.9 263.0 613.8 C249.8 614.6 241.7 614.3 230.0 614.5 C218.3 614.7 200.7 614.3 193.0 614.8 C185.3 615.2 186.1 616.2 183.7 617.2 C181.3 618.2 179.7 619.6 178.6 621.0 C177.5 622.4 177.0 624.1 176.9 625.4 C176.8 626.7 177.4 627.8 178.0 628.8 C178.6 629.8 178.5 630.2 180.6 631.6 C182.7 633.0 186.6 635.5 190.6 637.1 C194.6 638.7 197.8 639.5 204.4 641.2 C211.0 643.0 220.2 645.9 230.0 647.6 C239.8 649.3 250.2 650.5 263.2 651.3 C276.2 652.1 296.9 651.9 308.0 652.4 C319.1 652.9 326.3 661.7 330.0 654.0 C333.7 646.3 333.5 613.4 330.0 606.0 Z" fill="none" stroke="#4a4638" stroke-opacity="0.5" stroke-width="5" filter="url(#blur2)"/><path d="M474.0 606.0 C477.5 598.6 483.5 608.1 494.8 609.4 C506.1 610.7 528.6 613.2 542.0 614.0 C555.4 614.8 563.7 614.3 575.0 614.4 C586.3 614.5 602.6 614.2 610.0 614.6 C617.4 615.0 617.0 615.9 619.5 617.0 C622.0 618.1 623.8 619.6 625.0 621.0 C626.2 622.4 626.7 623.9 626.8 625.2 C626.9 626.5 626.2 627.7 625.6 628.8 C625.0 629.9 625.1 630.2 623.0 631.6 C620.9 633.0 617.0 635.4 613.0 637.0 C609.0 638.6 605.3 639.6 599.0 641.2 C592.7 642.8 584.5 645.2 575.0 646.8 C565.5 648.4 555.2 649.9 542.0 650.8 C528.8 651.7 507.3 651.9 496.0 652.4 C484.7 652.9 477.7 661.7 474.0 654.0 C470.3 646.3 470.5 613.4 474.0 606.0 Z" fill="none" stroke="#4a4638" stroke-opacity="0.5" stroke-width="5" filter="url(#blur2)"/><rect x="170" y="600" width="470" height="60" fill="#000" filter="url(#mottle)" opacity="0.18"/><rect x="170" y="600" width="470" height="60" fill="#000" filter="url(#mottleL)" opacity="0.16"/></g>
<path d="M392.5 434.9 C387.1 436.6 382.1 440.9 376.3 445.2 C370.5 449.5 363.1 455.5 357.6 460.7 C352.2 465.9 347.0 472.4 343.6 476.3 C340.2 480.2 339.1 481.5 337.4 484.0 C335.7 486.5 335.1 486.6 333.3 491.3 C331.6 496.1 328.8 505.4 326.9 512.5 C324.9 519.6 323.2 526.7 321.6 533.8 C320.0 540.9 318.7 547.9 317.3 555.0 C315.9 562.1 314.2 569.2 313.0 576.3 C311.8 583.4 310.7 591.5 309.9 597.5 C309.1 603.5 308.4 604.9 308.0 612.0 C307.6 619.1 306.8 631.9 307.5 640.0 C308.2 648.1 310.8 653.6 312.3 660.4 C313.8 667.2 314.9 674.0 316.4 680.8 C317.9 687.6 319.7 695.0 321.5 701.2 C323.3 707.4 324.9 712.4 327.0 718.0 C329.1 723.6 332.0 729.4 334.4 734.6 C336.8 739.8 338.8 744.1 341.6 749.0 C344.4 753.9 347.0 758.8 351.1 763.7 C355.2 768.6 360.9 774.6 366.4 778.2 C371.9 781.8 378.1 783.9 383.9 785.5 C389.7 787.1 394.8 787.9 401.4 787.9 C407.9 787.9 416.4 787.1 423.2 785.5 C430.0 783.9 436.5 781.8 442.1 778.2 C447.7 774.6 452.7 768.6 456.7 763.7 C460.7 758.8 463.4 753.9 466.2 749.0 C469.0 744.1 471.3 739.8 473.4 734.6 C475.4 729.4 476.8 723.6 478.5 718.0 C480.2 712.4 481.9 707.4 483.6 701.2 C485.3 695.0 487.2 687.8 488.7 681.0 C490.2 674.2 491.6 667.2 492.8 660.4 C494.0 653.6 495.5 648.1 496.0 640.0 C496.5 631.9 496.4 619.1 496.0 612.0 C495.6 604.9 494.8 603.5 493.7 597.5 C492.6 591.5 490.7 583.4 489.5 576.3 C488.3 569.2 487.6 562.1 486.3 555.0 C485.1 547.9 483.8 540.9 482.0 533.8 C480.2 526.7 477.8 519.6 475.7 512.5 C473.6 505.4 470.7 495.3 469.3 491.3 C467.9 487.3 468.4 490.7 467.1 488.7 C465.8 486.7 464.9 483.8 461.7 479.4 C458.5 475.0 453.6 467.8 447.7 462.3 C441.8 456.9 432.4 451.3 426.0 446.7 C419.6 442.1 414.6 436.9 409.0 434.9 C403.4 432.9 397.9 433.2 392.5 434.9 Z" fill="url(#bodyG)"/>
<clipPath id="bodyClip"><path d="M392.5 434.9 C387.1 436.6 382.1 440.9 376.3 445.2 C370.5 449.5 363.1 455.5 357.6 460.7 C352.2 465.9 347.0 472.4 343.6 476.3 C340.2 480.2 339.1 481.5 337.4 484.0 C335.7 486.5 335.1 486.6 333.3 491.3 C331.6 496.1 328.8 505.4 326.9 512.5 C324.9 519.6 323.2 526.7 321.6 533.8 C320.0 540.9 318.7 547.9 317.3 555.0 C315.9 562.1 314.2 569.2 313.0 576.3 C311.8 583.4 310.7 591.5 309.9 597.5 C309.1 603.5 308.4 604.9 308.0 612.0 C307.6 619.1 306.8 631.9 307.5 640.0 C308.2 648.1 310.8 653.6 312.3 660.4 C313.8 667.2 314.9 674.0 316.4 680.8 C317.9 687.6 319.7 695.0 321.5 701.2 C323.3 707.4 324.9 712.4 327.0 718.0 C329.1 723.6 332.0 729.4 334.4 734.6 C336.8 739.8 338.8 744.1 341.6 749.0 C344.4 753.9 347.0 758.8 351.1 763.7 C355.2 768.6 360.9 774.6 366.4 778.2 C371.9 781.8 378.1 783.9 383.9 785.5 C389.7 787.1 394.8 787.9 401.4 787.9 C407.9 787.9 416.4 787.1 423.2 785.5 C430.0 783.9 436.5 781.8 442.1 778.2 C447.7 774.6 452.7 768.6 456.7 763.7 C460.7 758.8 463.4 753.9 466.2 749.0 C469.0 744.1 471.3 739.8 473.4 734.6 C475.4 729.4 476.8 723.6 478.5 718.0 C480.2 712.4 481.9 707.4 483.6 701.2 C485.3 695.0 487.2 687.8 488.7 681.0 C490.2 674.2 491.6 667.2 492.8 660.4 C494.0 653.6 495.5 648.1 496.0 640.0 C496.5 631.9 496.4 619.1 496.0 612.0 C495.6 604.9 494.8 603.5 493.7 597.5 C492.6 591.5 490.7 583.4 489.5 576.3 C488.3 569.2 487.6 562.1 486.3 555.0 C485.1 547.9 483.8 540.9 482.0 533.8 C480.2 526.7 477.8 519.6 475.7 512.5 C473.6 505.4 470.7 495.3 469.3 491.3 C467.9 487.3 468.4 490.7 467.1 488.7 C465.8 486.7 464.9 483.8 461.7 479.4 C458.5 475.0 453.6 467.8 447.7 462.3 C441.8 456.9 432.4 451.3 426.0 446.7 C419.6 442.1 414.6 436.9 409.0 434.9 C403.4 432.9 397.9 433.2 392.5 434.9 Z"/></clipPath>
<g clip-path="url(#bodyClip)"><path d="M392.5 434.9 C387.1 436.6 382.1 440.9 376.3 445.2 C370.5 449.5 363.1 455.5 357.6 460.7 C352.2 465.9 347.0 472.4 343.6 476.3 C340.2 480.2 339.1 481.5 337.4 484.0 C335.7 486.5 335.1 486.6 333.3 491.3 C331.6 496.1 328.8 505.4 326.9 512.5 C324.9 519.6 323.2 526.7 321.6 533.8 C320.0 540.9 318.7 547.9 317.3 555.0 C315.9 562.1 314.2 569.2 313.0 576.3 C311.8 583.4 310.7 591.5 309.9 597.5 C309.1 603.5 308.4 604.9 308.0 612.0 C307.6 619.1 306.8 631.9 307.5 640.0 C308.2 648.1 310.8 653.6 312.3 660.4 C313.8 667.2 314.9 674.0 316.4 680.8 C317.9 687.6 319.7 695.0 321.5 701.2 C323.3 707.4 324.9 712.4 327.0 718.0 C329.1 723.6 332.0 729.4 334.4 734.6 C336.8 739.8 338.8 744.1 341.6 749.0 C344.4 753.9 347.0 758.8 351.1 763.7 C355.2 768.6 360.9 774.6 366.4 778.2 C371.9 781.8 378.1 783.9 383.9 785.5 C389.7 787.1 394.8 787.9 401.4 787.9 C407.9 787.9 416.4 787.1 423.2 785.5 C430.0 783.9 436.5 781.8 442.1 778.2 C447.7 774.6 452.7 768.6 456.7 763.7 C460.7 758.8 463.4 753.9 466.2 749.0 C469.0 744.1 471.3 739.8 473.4 734.6 C475.4 729.4 476.8 723.6 478.5 718.0 C480.2 712.4 481.9 707.4 483.6 701.2 C485.3 695.0 487.2 687.8 488.7 681.0 C490.2 674.2 491.6 667.2 492.8 660.4 C494.0 653.6 495.5 648.1 496.0 640.0 C496.5 631.9 496.4 619.1 496.0 612.0 C495.6 604.9 494.8 603.5 493.7 597.5 C492.6 591.5 490.7 583.4 489.5 576.3 C488.3 569.2 487.6 562.1 486.3 555.0 C485.1 547.9 483.8 540.9 482.0 533.8 C480.2 526.7 477.8 519.6 475.7 512.5 C473.6 505.4 470.7 495.3 469.3 491.3 C467.9 487.3 468.4 490.7 467.1 488.7 C465.8 486.7 464.9 483.8 461.7 479.4 C458.5 475.0 453.6 467.8 447.7 462.3 C441.8 456.9 432.4 451.3 426.0 446.7 C419.6 442.1 414.6 436.9 409.0 434.9 C403.4 432.9 397.9 433.2 392.5 434.9 Z" fill="none" stroke="#4f4c40" stroke-opacity="0.45" stroke-width="12" filter="url(#blur6)" mask="url(#lowerMask)"/><rect x="300" y="600" width="200" height="190" fill="url(#headG)"/><ellipse cx="350" cy="520" rx="22" ry="50" fill="#9a8a6c" opacity="0.35" filter="url(#blur6)"/><path d="M394 440 C398 460 399 490 401.6 540 C404 490 405 460 409 440 Z" fill="#6f6653" opacity="0.35" filter="url(#blur1)"/><line x1="401.6" y1="440" x2="401.6" y2="540" stroke="#b8ad92" stroke-opacity="0.4" stroke-width="1.4" filter="url(#blur1)"/></g>
<g clip-path="url(#bodyClip)"><rect x="300" y="430" width="200" height="360" fill="#000" filter="url(#mottle)" opacity="0.24"/><rect x="300" y="430" width="200" height="360" fill="#000" filter="url(#mottleL)" opacity="0.2"/></g>
<path d="M389 442 C392.5 437 394.4 432 395 425 C396 410 398 380 399.3 362 C399.8 354 400.4 349.6 401.6 349 C402.8 349.6 403.4 354 403.8 362 C404.8 380 406.4 410 407.6 425 C408.2 432 410 437 414 442 C408 447 395 447 389 442 Z" fill="url(#dfinG)"/>
<path d="M401.6 352 V440" stroke="#b9ae96" stroke-opacity="0.45" stroke-width="1" fill="none"/>
<path d="M337.4 484 C346 472 360 458 376.3 445.2 C382 441 388 437.5 393.5 435.2" fill="none" stroke="#72e2de" stroke-width="2"/>
<path d="M408.5 435.2 C414 437.5 420 441 426 446.7 C440 456 454 468 467.1 488.7" fill="none" stroke="#72e2de" stroke-width="2"/>
</g>
<circle cx="29.5" cy="147" r="16.8" fill="#ebe9ea" stroke="#b8b8bb" stroke-width="1.2"/>
<path d="M26.6 144.2 C26.6 141.8 28 140.6 29.8 140.6 C31.8 140.6 33 141.8 33 143.6 C33 145.4 31.6 146.2 30.6 147 C29.8 147.6 29.6 148.2 29.6 150.4" fill="none" stroke="#555" stroke-width="1.5"/>
<circle cx="29.6" cy="154" r="1.1" fill="#555"/>
<circle cx="169.2" cy="532" r="17.2" fill="#eef1f4" fill-opacity="0.85" stroke="#3a73a8" stroke-width="1.7"/>
<path d="M163.6 523.4 H175 L178.4 540.4 H160.2 Z" fill="none" stroke="#3a73a8" stroke-width="1.6" stroke-linejoin="round"/>
<path d="M169.4 526.2 V537.6 M166.4 529 L169.4 526 L172.4 529 M165.4 534.4 L169.4 538 L173.4 534.4" fill="none" stroke="#3a73a8" stroke-width="1.5"/>
<rect x="0" y="110" width="803" height="4" fill="url(#topShade)"/>
<rect x="798" y="110" width="5" height="690" fill="url(#rightShade)"/>
</g>

<!-- right side -->
<rect x="803" y="68" width="227" height="732" fill="#f0f2f4"/>
<text x="822.5" y="100.1" font-size="15.5" fill="#2f7bb7" stroke="#2f7bb7" stroke-width="0.2" textLength="83.2" lengthAdjust="spacingAndGlyphs">3D selection</text>
<g fill="none" stroke="#dcdee2" stroke-width="1">
  <rect x="824.5" y="120.5" width="185" height="40.5"/>
  <rect x="824.5" y="197.5" width="88" height="56.5"/>
  <rect x="824.5" y="293" width="88" height="56.5"/>
  <rect x="920.5" y="293" width="88" height="56.5"/>
  <rect x="824.5" y="386.5" width="40" height="40.5"/>
  <rect x="872.5" y="386.5" width="40" height="40.5"/>
  <rect x="920.5" y="386.5" width="40" height="40.5"/>
  <rect x="968.5" y="386.5" width="40" height="40.5"/>
  <rect x="824.5" y="462.5" width="40" height="40.5"/>
  <rect x="872.5" y="462.5" width="40" height="40.5"/>
  <rect x="920.5" y="462.5" width="40" height="40.5"/>
  <rect x="968.5" y="462.5" width="40" height="40.5"/>
</g>
<rect x="919" y="198.6" width="89" height="56.2" fill="url(#multiBtn)"/>
<g font-size="10.5">
  <text x="916.4" y="144.2" fill="#b9bbc0" textLength="43.1" lengthAdjust="spacingAndGlyphs">Edit color</text>
  <text x="824" y="183" fill="#3d3f5c" stroke="#3d3f5c" stroke-width="0.3" textLength="27" lengthAdjust="spacingAndGlyphs">Select</text>
  <text x="849" y="241.4" fill="#bfc1c5" textLength="40" lengthAdjust="spacingAndGlyphs">Select all</text>
  <text x="939.2" y="241.8" fill="#ffffff" stroke="#ffffff" stroke-width="0.25" textLength="49.1" lengthAdjust="spacingAndGlyphs">Multiselect</text>
  <text x="824" y="278.8" fill="#3d3f5c" stroke="#3d3f5c" stroke-width="0.3" textLength="42.6" lengthAdjust="spacingAndGlyphs">Grouping</text>
  <text x="854.4" y="336.9" fill="#bfc1c5" textLength="28.2" lengthAdjust="spacingAndGlyphs">Group</text>
  <text x="944.6" y="336.9" fill="#bfc1c5" textLength="40.1" lengthAdjust="spacingAndGlyphs">Ungroup</text>
  <text x="824" y="373.8" fill="#3d3f5c" stroke="#3d3f5c" stroke-width="0.3" textLength="17" lengthAdjust="spacingAndGlyphs">Edit</text>
  <text x="824" y="449.3" fill="#3d3f5c" stroke="#3d3f5c" stroke-width="0.3" textLength="66.1" lengthAdjust="spacingAndGlyphs">Rotate and flip</text>
  <text x="824" y="524.7" fill="#3d3f5c" stroke="#3d3f5c" stroke-width="0.3" textLength="41.5" lengthAdjust="spacingAndGlyphs">Texturing</text>
  <text x="850.6" y="555" fill="#3d3f5c" stroke="#3d3f5c" stroke-width="0.3" textLength="35.2" lengthAdjust="spacingAndGlyphs">Smooth</text>
</g>
<!-- checkbox -->
<rect x="825" y="541.7" width="18.7" height="18.6" fill="#ffffff"/>
<path d="M828.6 551.4 L832.2 555 L839.8 546.4" fill="none" stroke="#2a6fb0" stroke-width="1.4"/>
<!-- icons -->
<g fill="none" stroke-linejoin="round" stroke-linecap="round">
  <!-- palette -->
  <path d="M844.8 133.4 C848.6 133.4 851.4 136.2 851.4 139.8 C851.4 143.6 848.8 146.6 845.8 146.6 C843.6 146.6 843.2 145 843.8 143.6 C844.4 142.2 843.4 141.2 842 141.6 C840.4 142.2 838.2 141.8 838.2 139.6 C838.2 136 841 133.4 844.8 133.4 Z" stroke="#b6b8bc" stroke-width="1.1"/>
  <g fill="#b6b8bc" stroke="none"><circle cx="840.8" cy="138.4" r="0.8"/><circle cx="843.6" cy="136.4" r="0.8"/><circle cx="847" cy="137" r="0.8"/><circle cx="848.4" cy="140.2" r="0.8"/><circle cx="846.6" cy="143.4" r="0.8"/></g>
  <!-- select all -->
  <rect x="862.4" y="211.8" width="13.2" height="11.8" stroke="#c8cacd" stroke-width="0.9" stroke-dasharray="1.2 1"/>
  <path d="M864.6 213.8 H873 V221.6 H864.6 Z M868.8 213.8 V221.6 M864.6 217.7 H873" stroke="#c2c4c8" stroke-width="1"/>
  <!-- multiselect -->
  <path d="M957.6 214.6 H966.6 V221.6 H957.6 Z M959.8 212.4 H969.6 V219.2" stroke="#ffffff" stroke-width="1.1"/>
  <path d="M964.4 216.8 V223.6 L966 222.2 L967.2 224.2 L968.2 223.6 L967.2 221.6 L969.4 221.4 Z" fill="#2f5acb" stroke="#ffffff" stroke-width="0.9"/>
  <!-- group -->
  <g stroke="#c4c6ca" stroke-width="1">
    <rect x="864" y="307" width="9.6" height="9.8"/>
    <rect x="866.6" y="309.6" width="4.4" height="4.6"/>
    <circle cx="864" cy="307" r="1" fill="#c4c6ca"/><circle cx="873.6" cy="307" r="1" fill="#c4c6ca"/><circle cx="864" cy="316.8" r="1" fill="#c4c6ca"/><circle cx="873.6" cy="316.8" r="1" fill="#c4c6ca"/>
    <!-- ungroup -->
    <path d="M959.6 314 V307 H966.6 V310.6"/>
    <rect x="963" y="311" width="7.2" height="7.2"/>
    <circle cx="959.6" cy="307" r="1" fill="#c4c6ca"/><circle cx="966.6" cy="307" r="1" fill="#c4c6ca"/><circle cx="959.6" cy="314" r="1" fill="#c4c6ca"/><circle cx="970.2" cy="311" r="1" fill="#c4c6ca"/><circle cx="963" cy="318.2" r="1" fill="#c4c6ca"/><circle cx="970.2" cy="318.2" r="1" fill="#c4c6ca"/>
  </g>
  <!-- scissors -->
  <g stroke="#222326" stroke-width="1.1">
    <path d="M842 400.4 L846.4 409 M847 400.4 L842.6 409"/>
    <circle cx="841.8" cy="410.6" r="1.7"/><circle cx="847.2" cy="410.6" r="1.7"/>
  </g>
  <!-- copy -->
  <g stroke="#222326" stroke-width="1.2">
    <path d="M890 409.8 H887 V399.2 H892.6 L894.4 401.2"/>
    <path d="M890.4 402.4 H896 L898.8 405.2 V412.4 H890.4 Z"/>
  </g>
  <!-- paste disabled -->
  <g stroke="#c9cacd" stroke-width="1">
    <path d="M940.4 411.6 H934.6 V401.6 H936.8 L938.2 400.4 L939.6 401.6 H942 V403.8"/>
    <rect x="940.4" y="404" width="6.4" height="8.4"/>
  </g>
  <!-- trash -->
  <g stroke="#c9cacd" stroke-width="1">
    <path d="M983.6 402.2 H994.2 M986.8 402.2 V400.6 H991 V402.2 M984.8 402.2 V412.6 H993 V402.2 M987.2 404.6 V410.4 M988.9 404.6 V410.4 M990.6 404.6 V410.4"/>
  </g>
  <!-- rotate left -->
  <g stroke="#c4c6ca" stroke-width="1.1">
    <path d="M841.4 486.6 A6 6 0 1 1 850.4 480.6"/>
    <path d="M839.4 485.4 L841.2 487.8 L843.4 485.6"/>
    <circle cx="844.4" cy="481.4" r="1.1"/>
  </g>
  <g stroke="#c4c6ca" stroke-width="1.1">
    <path d="M895.9 486.6 A6 6 0 1 0 886.9 480.6"/>
    <path d="M897.9 485.4 L896.1 487.8 L893.9 485.6"/>
    <circle cx="892.9" cy="481.4" r="1.1"/>
  </g>
  <!-- flip h -->
  <path d="M940.4 476.8 V487 H934 Z" fill="#c4c6ca" stroke="#c4c6ca" stroke-width="0.8"/>
  <path d="M942.2 476.8 V487 H947.2 Z" stroke="#c4c6ca" stroke-width="0.9"/>
  <!-- flip v -->
  <path d="M983 481 L994.8 474.8 V481 Z" stroke="#c4c6ca" stroke-width="0.9"/>
  <path d="M983 482.6 H994.8 V488.2 Z" fill="#c4c6ca" stroke="#c4c6ca" stroke-width="0.8"/>
</g>

</svg>
</body></html>
